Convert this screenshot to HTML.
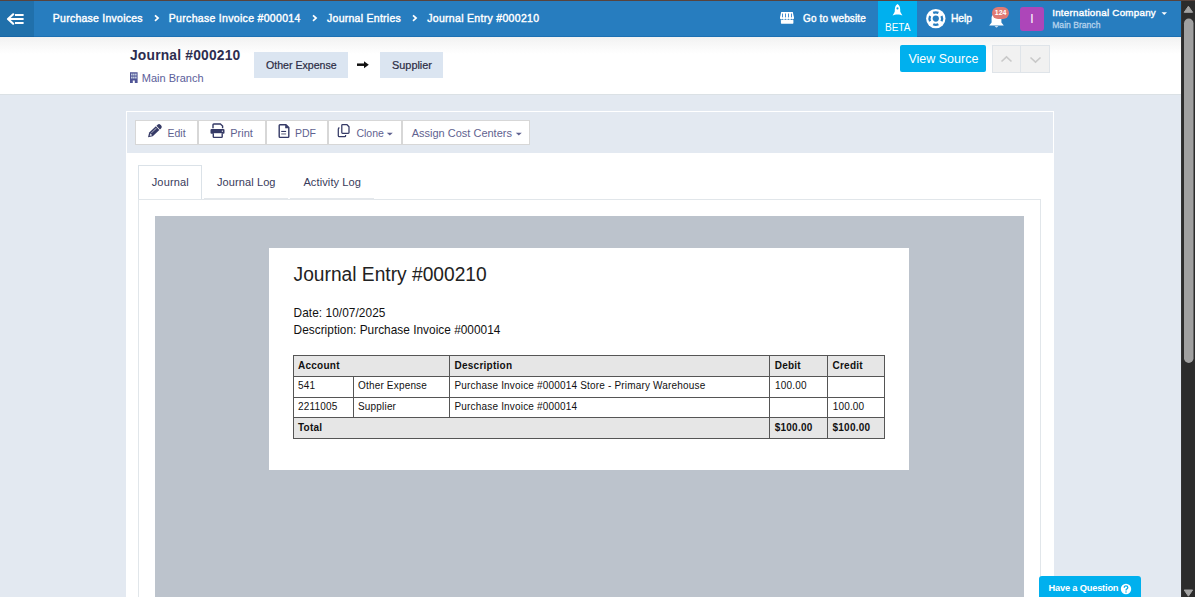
<!DOCTYPE html>
<html><head><meta charset="utf-8"><style>
html,body{margin:0;padding:0;width:1195px;height:597px;overflow:hidden;background:#e3e9f1;}
body{position:relative;font-family:"Liberation Sans", sans-serif;}
.t{position:absolute;white-space:nowrap;}
.r{position:absolute;}
svg.r{overflow:visible;}
</style></head><body>
<div class="r" style="left:0px;top:0px;width:1195px;height:1px;background:#58433d"></div>
<div class="r" style="left:0px;top:1px;width:1181px;height:36px;background:#277dbf"></div>
<div class="r" style="left:0px;top:36px;width:1181px;height:1px;background:#1c70b3"></div>
<div class="r" style="left:0px;top:1px;width:34px;height:35px;background:#2070ab"></div>
<div class="r" style="left:0px;top:36px;width:34px;height:1px;background:#1766a6"></div>
<svg class="r" style="left:0px;top:1px" width="34" height="35" viewBox="0 0 34 35"><polyline points="13.2,13.3 8,18 13.2,22.7" fill="none" stroke="#fff" stroke-width="2.2" stroke-linecap="round" stroke-linejoin="round"/><rect x="15" y="13" width="8.6" height="2" fill="#fff"/><rect x="9" y="17" width="14.6" height="2" fill="#fff"/><rect x="15" y="21" width="8.6" height="2" fill="#fff"/></svg>
<div class="t" style="left:52.8px;top:11.26px;font-size:10.5px;line-height:14px;color:#fff;font-weight:normal;letter-spacing:0.25px;-webkit-text-stroke:0.4px #fff;">Purchase Invoices</div>
<div class="t" style="left:168.8px;top:11.26px;font-size:10.5px;line-height:14px;color:#fff;font-weight:normal;letter-spacing:0.31px;-webkit-text-stroke:0.4px #fff;">Purchase Invoice #000014</div>
<div class="t" style="left:327px;top:11.26px;font-size:10.5px;line-height:14px;color:#fff;font-weight:normal;letter-spacing:0.27px;-webkit-text-stroke:0.4px #fff;">Journal Entries</div>
<div class="t" style="left:427.2px;top:11.26px;font-size:10.5px;line-height:14px;color:#fff;font-weight:normal;letter-spacing:0.31px;-webkit-text-stroke:0.4px #fff;">Journal Entry #000210</div>
<svg class="r" style="left:153.6px;top:14px" width="6" height="8" viewBox="0 0 6 8"><polyline points="1,1.3 4.1,4.1 1,6.9" fill="none" stroke="#fff" stroke-width="1.7"/></svg>
<svg class="r" style="left:311.5px;top:14px" width="6" height="8" viewBox="0 0 6 8"><polyline points="1,1.3 4.1,4.1 1,6.9" fill="none" stroke="#fff" stroke-width="1.7"/></svg>
<svg class="r" style="left:411.8px;top:14px" width="6" height="8" viewBox="0 0 6 8"><polyline points="1,1.3 4.1,4.1 1,6.9" fill="none" stroke="#fff" stroke-width="1.7"/></svg>
<svg class="r" style="left:779px;top:11px" width="16" height="14" viewBox="0 0 16 14"><path d="M2.2,1 H13.8 L15,6.8 H1 Z" fill="#fff"/><g fill="#fff"><circle cx="2.4" cy="7" r="1.45"/><circle cx="4.9" cy="7.2" r="1.5"/><circle cx="7.9" cy="7.2" r="1.5"/><circle cx="10.9" cy="7.2" r="1.5"/><circle cx="13.6" cy="7" r="1.45"/></g><g fill="#3d8ad0"><rect x="3" y="2.3" width="0.95" height="4" rx="0.4"/><rect x="6" y="2.3" width="0.95" height="4" rx="0.4"/><rect x="9" y="2.3" width="0.95" height="4" rx="0.4"/><rect x="12" y="2.3" width="0.95" height="4" rx="0.4"/></g><rect x="1.9" y="9" width="12.5" height="3.7" rx="0.6" fill="#fff"/></svg>
<div class="t" style="left:803px;top:12.43px;font-size:10px;line-height:13px;color:#fff;font-weight:normal;letter-spacing:0.14px;-webkit-text-stroke:0.4px #fff;">Go to website</div>
<div class="r" style="left:878px;top:1px;width:39px;height:35.5px;background:#00b0ee"></div>
<svg class="r" style="left:891px;top:3px" width="13" height="14" viewBox="0 0 13 14"><path d="M6.5,1 C9.1,2.4 9.7,6.4 8.9,11.6 L4.1,11.6 C3.3,6.4 3.9,2.4 6.5,1 Z" fill="#fff"/><path d="M4.1,8.2 L1.6,12.4 L4.5,11.6 Z M8.9,8.2 L11.4,12.4 L8.5,11.6 Z" fill="#fff"/><circle cx="6.5" cy="5.4" r="1.05" fill="#00b0ee"/></svg>
<div class="t" style="left:885px;top:21.04px;font-size:10px;line-height:13px;color:#fff;font-weight:normal;">BETA</div>
<svg class="r" style="left:925px;top:8px" width="22" height="22" viewBox="0 0 22 22"><circle cx="10.8" cy="10.6" r="9.7" fill="#fff"/><circle cx="10.8" cy="10.6" r="3.1" fill="#277dbf"/><g stroke="#277dbf" stroke-width="2.3" fill="none"><path d="M8.2,4.9 A6.2,6.2 0 0 1 13.4,4.9"/><path d="M8.2,16.3 A6.2,6.2 0 0 0 13.4,16.3"/><path d="M5.1,8 A6.2,6.2 0 0 0 5.1,13.2"/><path d="M16.5,8 A6.2,6.2 0 0 1 16.5,13.2"/></g></svg>
<div class="t" style="left:951px;top:12.33px;font-size:10.3px;line-height:13px;color:#fff;font-weight:normal;letter-spacing:-0.1px;-webkit-text-stroke:0.4px #fff;">Help</div>
<svg class="r" style="left:988px;top:11px" width="18" height="18" viewBox="0 0 18 18"><path d="M8.5,2 C11.5,2 13.4,4.4 13.4,7.5 L13.4,11.5 L15.8,14.6 L1.2,14.6 L3.6,11.5 L3.6,7.5 C3.6,4.4 5.5,2 8.5,2 Z" fill="#fff"/><path d="M6.6,15.3 L10.4,15.3 Q8.5,17.5 6.6,15.3 Z" fill="#fff"/></svg>
<div class="r" style="left:992.2px;top:7px;width:16.6px;height:12px;background:#e07a73;border-radius:6px"></div>
<div class="t" style="left:993.6px;top:8.37px;font-size:7px;line-height:9px;color:#fff;font-weight:bold;width:14px;text-align:center;">124</div>
<div class="r" style="left:1020px;top:7px;width:24px;height:24px;background:#ad46b9;border-radius:3px"></div>
<div class="t" style="left:1028.5px;top:11.04px;font-size:12px;line-height:16px;color:#fff;font-weight:normal;width:7px;text-align:center;">I</div>
<div class="t" style="left:1052.2px;top:6.20px;font-size:9.8px;line-height:13px;color:#fff;font-weight:normal;letter-spacing:0.25px;-webkit-text-stroke:0.4px #fff;">International Company</div>
<svg class="r" style="left:1161px;top:11px" width="7" height="5" viewBox="0 0 7 5"><polygon points="0.5,1.2 6,1.2 3.25,4" fill="#fff"/></svg>
<div class="t" style="left:1052.2px;top:19.72px;font-size:8.6px;line-height:11px;color:#b4d2ec;font-weight:normal;-webkit-text-stroke:0.3px #b4d2ec;">Main Branch</div>
<div class="r" style="left:0px;top:37px;width:1181px;height:57px;background:linear-gradient(#f2f2f2 0px,#ffffff 17px)"></div>
<div class="r" style="left:0px;top:94px;width:1181px;height:1px;background:#dbe1e5"></div>
<div class="r" style="left:0px;top:95px;width:1181px;height:502px;background:#e3e9f1"></div>
<div class="t" style="left:130px;top:46.92px;font-size:13.8px;line-height:18px;color:#2d2d4f;font-weight:bold;letter-spacing:0.2px;">Journal #000210</div>
<svg class="r" style="left:129px;top:71px" width="10" height="13" viewBox="0 0 10 13"><path d="M1,1.2 H8.6 V12 H5.8 V9.6 H3.8 V12 H1 Z" fill="#4f5496"/><g fill="#dce9f0"><rect x="2.2" y="2.6" width="1.3" height="1.9"/><rect x="4.2" y="2.6" width="1.3" height="1.9"/><rect x="6.2" y="2.6" width="1.3" height="1.9"/><rect x="2.2" y="5.6" width="1.3" height="1.9"/><rect x="4.2" y="5.6" width="1.3" height="1.9"/><rect x="6.2" y="5.6" width="1.3" height="1.9"/></g></svg>
<div class="t" style="left:141.8px;top:71.09px;font-size:11px;line-height:14px;color:#5c5e9a;font-weight:normal;">Main Branch</div>
<div class="r" style="left:254px;top:52px;width:94px;height:26px;background:#dbe5f1"></div>
<div class="t" style="left:266px;top:57.93px;font-size:10.6px;line-height:14px;color:#2b2c44;font-weight:normal;-webkit-text-stroke:0.2px #2b2c44;">Other Expense</div>
<svg class="r" style="left:356px;top:59px" width="13" height="10" viewBox="0 0 13 10"><path d="M1,5.7 H9" stroke="#111" stroke-width="2.5"/><polygon points="8,2.2 12.8,5.7 8,9.2" fill="#111"/></svg>
<div class="r" style="left:380px;top:52px;width:63px;height:26px;background:#dbe5f1"></div>
<div class="t" style="left:392px;top:57.82px;font-size:10.9px;line-height:14px;color:#2b2c44;font-weight:normal;-webkit-text-stroke:0.2px #2b2c44;">Supplier</div>
<div class="r" style="left:900px;top:45px;width:86px;height:27px;background:#00b0ee;border-radius:2px"></div>
<div class="t" style="left:908.4px;top:51.27px;font-size:12.5px;line-height:16px;color:#fff;font-weight:normal;">View Source</div>
<div class="r" style="left:992px;top:45px;width:58px;height:28px;background:#f1f1f1;border:1px solid #dfe4e9;box-sizing:border-box"></div>
<div class="r" style="left:1020px;top:45px;width:1px;height:28px;background:#dfe4e9"></div>
<svg class="r" style="left:1000px;top:54.5px" width="13" height="8" viewBox="0 0 13 8"><polyline points="1.5,6.5 6.5,1.8 11.5,6.5" fill="none" stroke="#c9c9c9" stroke-width="1.6"/></svg>
<svg class="r" style="left:1029px;top:55.7px" width="13" height="8" viewBox="0 0 13 8"><polyline points="1.5,1.5 6.5,6.2 11.5,1.5" fill="none" stroke="#c9c9c9" stroke-width="1.6"/></svg>
<div class="r" style="left:126px;top:111px;width:928px;height:486px;background:#fff"></div>
<div class="r" style="left:127px;top:112px;width:926px;height:41px;background:#e3e9f1"></div>
<div class="r" style="left:135px;top:120px;width:63px;height:25px;background:#fff;border:1px solid #d7d7d7;box-sizing:border-box"></div>
<div class="r" style="left:198px;top:120px;width:68px;height:25px;background:#fff;border:1px solid #d7d7d7;box-sizing:border-box"></div>
<div class="r" style="left:266px;top:120px;width:62px;height:25px;background:#fff;border:1px solid #d7d7d7;box-sizing:border-box"></div>
<div class="r" style="left:328px;top:120px;width:74px;height:25px;background:#fff;border:1px solid #d7d7d7;box-sizing:border-box"></div>
<div class="r" style="left:402px;top:120px;width:128px;height:25px;background:#fff;border:1px solid #d7d7d7;box-sizing:border-box"></div>
<svg class="r" style="left:144px;top:121px" width="20" height="20" viewBox="0 0 20 20"><g transform="translate(10.3,10.2) rotate(-43)"><path d="M-8.8,0.2 L-4.6,-2.5 L4.5,-2.5 L4.5,2.6 L-4.6,2.6 Z" fill="#353a66"/><path d="M-6.6,0.3 L-4.3,-1.1 L-4.3,1.5 Z" fill="#fff" opacity="0.85"/><rect x="-3.4" y="-1.2" width="7" height="0.8" fill="#fff" opacity="0.55"/><path d="M5.3,-2.5 H6.8 Q8.9,-2.5 8.9,-0.5 V0.6 Q8.9,2.6 6.8,2.6 H5.3 Z" fill="#353a66"/></g></svg>
<div class="t" style="left:167.5px;top:126.06px;font-size:10.5px;line-height:14px;color:#5f6290;font-weight:normal;">Edit</div>
<svg class="r" style="left:207px;top:121px" width="22" height="20" viewBox="0 0 22 20"><path d="M6,7.2 V3.9 Q6,3 6.9,3 H13.4 L15.6,5 V7.2" fill="none" stroke="#353a66" stroke-width="1.4"/><rect x="3.5" y="7.9" width="14" height="4.9" rx="1.1" fill="#353a66"/><path d="M6.3,12.2 V15.7 Q6.3,16.4 7,16.4 H14.5 Q15.2,16.4 15.2,15.7 V12.2" fill="#fff" stroke="#353a66" stroke-width="1.4"/><circle cx="15.4" cy="10.2" r="0.65" fill="#fff"/></svg>
<div class="t" style="left:230.2px;top:125.89px;font-size:11px;line-height:14px;color:#5f6290;font-weight:normal;">Print</div>
<svg class="r" style="left:274px;top:121px" width="20" height="20" viewBox="0 0 20 20"><path d="M6,3.7 H12 L14.8,6.5 V15.6 Q14.8,16.4 14,16.4 H6 Q5.2,16.4 5.2,15.6 V4.5 Q5.2,3.7 6,3.7 Z" fill="none" stroke="#353a66" stroke-width="1.4" stroke-linejoin="round"/><path d="M11.2,3.6 V7.2 H14.9 Z" fill="#353a66"/><rect x="7.2" y="9.9" width="4.9" height="1.1" fill="#353a66"/><rect x="7.2" y="12.4" width="4.9" height="1.1" fill="#6d6f86"/></svg>
<div class="t" style="left:295px;top:126.06px;font-size:10.5px;line-height:14px;color:#5f6290;font-weight:normal;">PDF</div>
<svg class="r" style="left:333px;top:120px" width="22" height="21" viewBox="0 0 22 21"><path d="M9.6,4.5 H13.8 L16,6.7 V12.6 Q16,13.4 15.2,13.4 H9.6 Q8.8,13.4 8.8,12.6 V5.3 Q8.8,4.5 9.6,4.5 Z" fill="none" stroke="#353a66" stroke-width="1.25" stroke-linejoin="round"/><path d="M6.4,7.6 Q5.3,8 5.3,9.2 V15.7 Q5.3,16.7 6.3,16.7 H11.7 Q12.6,16.7 12.6,15.8 V15.1" fill="none" stroke="#353a66" stroke-width="1.25"/></svg>
<div class="t" style="left:356.4px;top:126.06px;font-size:10.5px;line-height:14px;color:#5f6290;font-weight:normal;">Clone</div>
<svg class="r" style="left:386px;top:131px" width="8" height="5" viewBox="0 0 8 5"><polygon points="0.8,1.8 6.8,1.8 3.8,4.6" fill="#5f6290"/></svg>
<div class="t" style="left:411.7px;top:125.89px;font-size:11px;line-height:14px;color:#5f6290;font-weight:normal;">Assign Cost Centers</div>
<svg class="r" style="left:515px;top:131px" width="8" height="5" viewBox="0 0 8 5"><polygon points="0.8,1.8 6.8,1.8 3.8,4.6" fill="#5f6290"/></svg>
<div class="r" style="left:138px;top:199px;width:903px;height:398px;border-left:1px solid #e1e6ea;border-top:1px solid #e1e6ea;border-right:1px solid #e1e6ea;box-sizing:border-box"></div>
<div class="r" style="left:138px;top:165px;width:64px;height:34px;background:#fff;border:1px solid #dbe2e8;border-bottom:none;box-sizing:border-box"></div>
<div class="r" style="left:203.5px;top:197.5px;width:84px;height:2px;background:#e3e7eb"></div>
<div class="r" style="left:290px;top:197.5px;width:84px;height:2px;background:#e3e7eb"></div>
<div class="t" style="left:151.7px;top:175.29px;font-size:11px;line-height:14px;color:#393b5b;font-weight:normal;letter-spacing:0.16px;">Journal</div>
<div class="t" style="left:217px;top:175.29px;font-size:11px;line-height:14px;color:#393b5b;font-weight:normal;letter-spacing:0.1px;">Journal Log</div>
<div class="t" style="left:303.4px;top:175.25px;font-size:11.1px;line-height:14px;color:#393b5b;font-weight:normal;letter-spacing:0.08px;">Activity Log</div>
<div class="r" style="left:155px;top:216px;width:869px;height:381px;background:#bcc3cc"></div>
<div class="r" style="left:269px;top:248px;width:640px;height:222px;background:#fff"></div>
<div class="t" style="left:293.6px;top:261.85px;font-size:19.2px;line-height:25px;color:#222;font-weight:normal;transform:scaleY(1.07);transform-origin:0 19.15px;">Journal Entry #000210</div>
<div class="t" style="left:293.6px;top:306.09px;font-size:11.85px;line-height:15px;color:#111;font-weight:normal;letter-spacing:0.06px;">Date: 10/07/2025</div>
<div class="t" style="left:293.6px;top:322.99px;font-size:11.85px;line-height:15px;color:#111;font-weight:normal;letter-spacing:0.02px;">Description: Purchase Invoice #000014</div>
<div class="r" style="left:293px;top:355px;width:592px;height:21px;background:#e6e6e6"></div>
<div class="r" style="left:293px;top:417px;width:592px;height:21px;background:#e6e6e6"></div>
<div class="r" style="left:293px;top:355px;width:592px;height:1px;background:#555"></div>
<div class="r" style="left:293px;top:376px;width:592px;height:1px;background:#555"></div>
<div class="r" style="left:293px;top:397px;width:592px;height:1px;background:#555"></div>
<div class="r" style="left:293px;top:417px;width:592px;height:1px;background:#555"></div>
<div class="r" style="left:293px;top:438px;width:592px;height:1px;background:#555"></div>
<div class="r" style="left:293px;top:355px;width:1px;height:84px;background:#555"></div>
<div class="r" style="left:884px;top:355px;width:1px;height:84px;background:#555"></div>
<div class="r" style="left:353px;top:376px;width:1px;height:42px;background:#555"></div>
<div class="r" style="left:449px;top:355px;width:1px;height:63px;background:#555"></div>
<div class="r" style="left:769px;top:355px;width:1px;height:84px;background:#555"></div>
<div class="r" style="left:827px;top:355px;width:1px;height:84px;background:#555"></div>
<div class="t" style="left:298px;top:359.34px;font-size:10px;line-height:13px;color:#111;font-weight:bold;letter-spacing:0.25px;">Account</div>
<div class="t" style="left:454.5px;top:359.34px;font-size:10px;line-height:13px;color:#111;font-weight:bold;letter-spacing:0.25px;">Description</div>
<div class="t" style="left:774.7px;top:359.34px;font-size:10px;line-height:13px;color:#111;font-weight:bold;letter-spacing:0.25px;">Debit</div>
<div class="t" style="left:832.5px;top:359.34px;font-size:10px;line-height:13px;color:#111;font-weight:bold;letter-spacing:0.25px;">Credit</div>
<div class="t" style="left:298px;top:379.14px;font-size:10px;line-height:13px;color:#111;font-weight:normal;letter-spacing:0.18px;">541</div>
<div class="t" style="left:358px;top:379.14px;font-size:10px;line-height:13px;color:#111;font-weight:normal;letter-spacing:0.18px;">Other Expense</div>
<div class="t" style="left:454.5px;top:379.14px;font-size:10px;line-height:13px;color:#111;font-weight:normal;letter-spacing:0.18px;">Purchase Invoice #000014 Store - Primary Warehouse</div>
<div class="t" style="left:775px;top:379.14px;font-size:10px;line-height:13px;color:#111;font-weight:normal;letter-spacing:0.18px;">100.00</div>
<div class="t" style="left:298px;top:399.94px;font-size:10px;line-height:13px;color:#111;font-weight:normal;letter-spacing:0.18px;">2211005</div>
<div class="t" style="left:358px;top:399.94px;font-size:10px;line-height:13px;color:#111;font-weight:normal;letter-spacing:0.18px;">Supplier</div>
<div class="t" style="left:454.5px;top:399.94px;font-size:10px;line-height:13px;color:#111;font-weight:normal;letter-spacing:0.18px;">Purchase Invoice #000014</div>
<div class="t" style="left:832.7px;top:399.94px;font-size:10px;line-height:13px;color:#111;font-weight:normal;letter-spacing:0.18px;">100.00</div>
<div class="t" style="left:298px;top:421.04px;font-size:10px;line-height:13px;color:#111;font-weight:bold;letter-spacing:0.25px;">Total</div>
<div class="t" style="left:774.7px;top:421.04px;font-size:10px;line-height:13px;color:#111;font-weight:bold;letter-spacing:0.25px;">$100.00</div>
<div class="t" style="left:832.5px;top:421.04px;font-size:10px;line-height:13px;color:#111;font-weight:bold;letter-spacing:0.25px;">$100.00</div>
<div class="r" style="left:1039px;top:576px;width:102px;height:21px;background:#00b0ee;border-radius:3px 3px 0 0"></div>
<div class="t" style="left:1048.5px;top:582.08px;font-size:9.3px;line-height:12px;color:#fff;font-weight:bold;letter-spacing:-0.2px;">Have a Question</div>
<svg class="r" style="left:1120px;top:583px" width="12" height="12" viewBox="0 0 12 12"><circle cx="6" cy="6" r="5.2" fill="#fff"/><path d="M4.2,4.8 Q4.2,2.9 6,2.9 Q7.8,2.9 7.8,4.6 Q7.8,5.6 6.6,6.2 Q6,6.5 6,7.4" fill="none" stroke="#00b0ee" stroke-width="1.3"/><circle cx="6" cy="9" r="0.75" fill="#00b0ee"/></svg>
<div class="r" style="left:1181px;top:1px;width:14px;height:596px;background:#2c2c2c"></div>
<div class="r" style="left:1181px;top:1px;width:1px;height:596px;background:#333"></div>
<svg class="r" style="left:1181px;top:0px" width="14" height="597" viewBox="0 0 14 597"><polygon points="3.2,12.3 11.6,12.3 7.4,6.2" fill="#a3a3a3" stroke="#a3a3a3" stroke-width="1" stroke-linejoin="round"/><rect x="3" y="18.5" width="9.5" height="344.5" rx="4.75" fill="#a0a0a0"/><polygon points="3.2,590 11.6,590 7.4,596.2" fill="#a3a3a3" stroke="#a3a3a3" stroke-width="1" stroke-linejoin="round"/></svg>
</body></html>
